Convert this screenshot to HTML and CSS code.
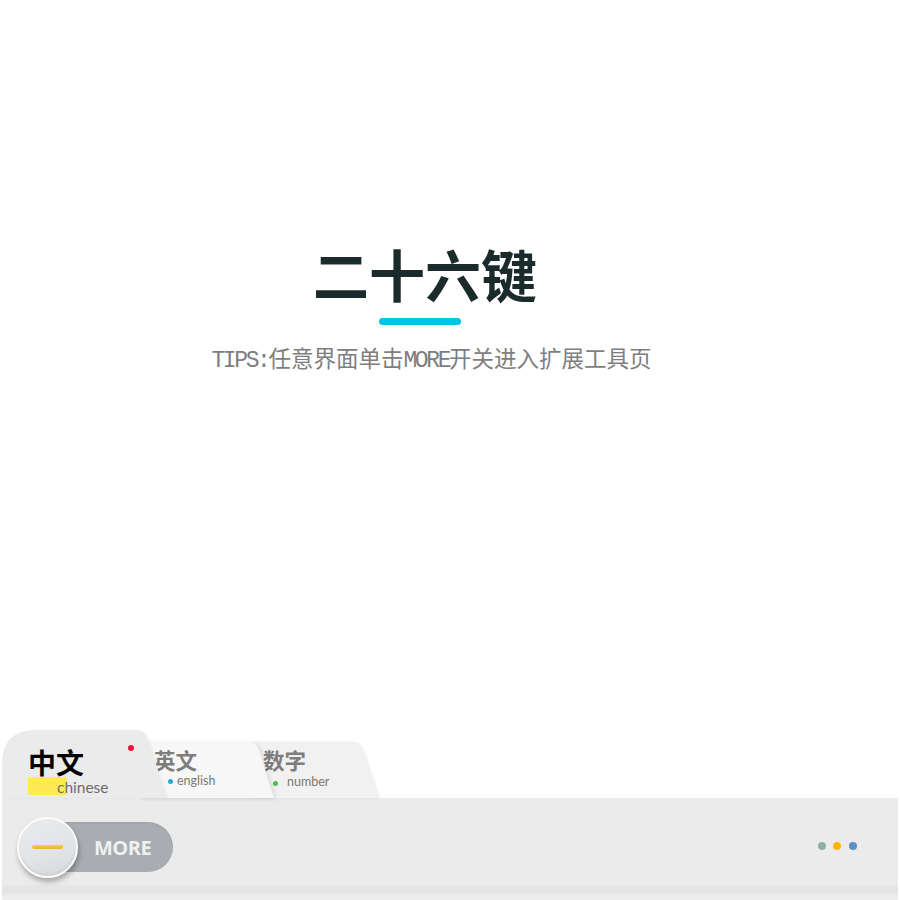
FILE: index.html
```html
<!DOCTYPE html>
<html lang="zh-CN">
<head>
<meta charset="utf-8">
<title>二十六键</title>
<link rel="stylesheet" href="styles.css">
</head>
<body>
<div class="screen">
  <main class="hero">
    <h1 class="title">二十六键</h1>
    <div class="underline"></div>
    <p class="tips"><span class="latin">TIPS:</span>任意界面单击<span class="latin">MORE</span>开关进入扩展工具页</p>
  </main>
  <section class="keyboard">
    <div class="tabs">
      <div class="tab tab-cn">
        <svg class="tab-bg" width="168" height="68" viewBox="0 0 168 68"><path d="M0,68 V34 Q0,0 34,0 H134 Q143,0 146,9 L165,68 Z" fill="#ebebeb"/></svg>
        <span class="badge"></span>
        <span class="tab-title">中文</span>
        <span class="tab-sub cn-sub"><span class="mark"></span><span class="sub-text">chinese</span></span>
      </div>
      <div class="tab tab-en">
        <svg class="tab-bg" width="140" height="56" viewBox="0 0 140 56"><path d="M0,56 V8 Q0,0 8,0 H108 Q116,0 119,8 L134,56 Z" fill="#f7f7f7"/></svg>
        <span class="tab-title">英文</span>
        <span class="tab-sub"><span class="dot dot-blue"></span><span class="sub-text">english</span></span>
      </div>
      <div class="tab tab-num">
        <svg class="tab-bg" width="134" height="56" viewBox="0 0 134 56"><path d="M0,56 V0 H100 Q110,0 113,9 L129,56 Z" fill="#f1f1f1"/></svg>
        <span class="tab-title">数字</span>
        <span class="tab-sub"><span class="dot dot-green"></span><span class="sub-text">number</span></span>
      </div>
    </div>
    <div class="bar">
      <div class="toggle">
        <span class="knob"><span class="dash"></span></span>
        <span class="more">MORE</span>
      </div>
      <div class="dots">
        <span class="pdot pdot-1"></span>
        <span class="pdot pdot-2"></span>
        <span class="pdot pdot-3"></span>
      </div>
    </div>
  </section>
</div>
</body>
</html>
```
FILE: styles.css
```css
* { box-sizing: border-box; }
html, body { margin: 0; padding: 0; background: #ffffff; }
body { font-family: "Noto Sans CJK SC", "Noto Sans", sans-serif; }

.screen {
  width: 900px;
  height: 900px;
  display: flex;
  flex-direction: column;
  overflow: hidden;
}

.hero {
  flex: 1;
  display: flex;
  flex-direction: column;
  align-items: center;
  padding: 245px 50px 0 0;
}

.title {
  margin: 0;
  font-size: 56px;
  line-height: 56px;
  font-weight: 700;
  color: #1b2a2b;
  letter-spacing: 0;
}

.underline {
  width: 82px;
  height: 7px;
  border-radius: 4px;
  background: #00c3e8;
  margin: 17px 10px 0 0;
}

.tips {
  margin: 21px 0 0 13px;
  font-size: 22.5px;
  line-height: 23px;
  color: #7e7e7e;
  font-family: "Noto Sans CJK SC", sans-serif;
  white-space: nowrap;
}
.tips .latin {
  font-family: "Liberation Mono", "DejaVu Sans Mono", monospace;
  font-size: 23px;
  letter-spacing: -2.4px;
}

.keyboard {
  margin: 0 2px;
  display: flex;
  flex-direction: column;
}

.tabs {
  height: 68px;
  display: flex;
  align-items: flex-end;
}

.tab {
  position: relative;
  display: flex;
  flex-direction: column;
}
.tab-bg {
  position: absolute;
  left: 0;
  top: 0;
  z-index: -1;
}
.tab-title, .tab-sub { position: relative; }

.tab-cn {
  width: 168px;
  height: 68px;
  z-index: 3;
  padding: 16px 0 0 26px;
}
.tab-en {
  width: 140px;
  height: 56px;
  margin-left: -30px;
  z-index: 2;
  padding: 7px 0 0 14px;
}
.tab-en .tab-bg { filter: drop-shadow(2px 1px 2px rgba(0,0,0,0.10)); }
.tab-num {
  width: 134px;
  height: 56px;
  margin-left: -30px;
  z-index: 1;
  padding: 7px 0 0 13px;
}
.tab-num .tab-bg { filter: drop-shadow(1px 0 1px rgba(0,0,0,0.08)); }
.tab-cn .tab-bg { filter: drop-shadow(1px 0 1px rgba(0,0,0,0.05)); }

.tab-cn .tab-title {
  font-size: 28px;
  line-height: 28px;
  margin-top: 2px;
  font-weight: 700;
  color: #000;
}
.tab-en .tab-title, .tab-num .tab-title {
  font-size: 21.5px;
  line-height: 22px;
  font-weight: 700;
  color: #7d7d7d;
}

.badge {
  position: absolute;
  left: 126px;
  top: 15px;
  width: 6px;
  height: 6px;
  border-radius: 50%;
  background: #f2123a;
}

.tab-sub {
  display: flex;
  align-items: center;
  font-family: "Lato", "Open Sans", sans-serif;
  color: #7a7a7a;
}
.cn-sub {
  margin-top: 1px;
  font-size: 15.5px;
  height: 18px;
}
.mark {
  flex: none;
  width: 39px;
  height: 18px;
  border-radius: 2px;
  background: #fdea55;
}
.cn-sub .sub-text {
  margin-left: -10px;
  color: #6d6d6d;
  line-height: 18px;
  padding-top: 2px;
}
.tab-en .tab-sub, .tab-num .tab-sub {
  font-size: 12.5px;
  line-height: 14px;
  height: 14px;
}
.tab-en .tab-sub { margin-top: 3px; }
.tab-num .tab-sub { margin-top: 2px; }
.dot {
  flex: none;
  display: block;
  width: 5px;
  height: 5px;
  border-radius: 50%;
}
.dot-blue { background: #2aa7d6; margin: 1px 4px 0 14px; }
.dot-green { background: #49c04f; margin: 7px 9px 0 10px; }
.tab-num .sub-text { padding-top: 4px; }

.bar {
  height: 102px;
  display: flex;
  align-items: flex-start;
  justify-content: space-between;
  padding: 24px 41px 0 16px;
  background: linear-gradient(to bottom, #ebebeb 0%, #ebebeb 84%, #e4e4e4 88%, #e3e3e3 92%, #ececec 96%, #ededed 100%);
}

.toggle {
  display: flex;
  align-items: center;
  width: 155px;
  height: 50px;
  border-radius: 25px;
  background: #a9acb0;
  box-shadow: inset 0 1px 2px rgba(0,0,0,0.08);
}
.knob {
  width: 61px;
  height: 61px;
  flex: none;
  margin-left: -1px;
  border-radius: 50%;
  border: 2px solid #fbfbfb;
  background: linear-gradient(160deg, #e9ebec 0%, #e2e4e5 55%, #d6d8da 100%);
  box-shadow: 1px 4px 5px rgba(0,0,0,0.28), inset 0 -2px 3px rgba(0,0,0,0.06);
  display: flex;
  align-items: center;
  justify-content: center;
}
.dash {
  width: 31px;
  height: 4px;
  border-radius: 2px;
  background: linear-gradient(to bottom, #f6cf4a, #eab23a);
  margin-left: -1px;
}
.more {
  margin-left: 16px;
  font-family: "Open Sans", "Noto Sans", sans-serif;
  font-weight: 700;
  font-size: 20px;
  letter-spacing: -0.5px;
  color: #eff0f0;
}

.dots {
  display: flex;
  gap: 7.7px;
  margin-top: 20px;
}
.pdot {
  width: 8px;
  height: 8px;
  border-radius: 50%;
}
.pdot-1 { background: #8fb0a6; }
.pdot-2 { background: #fbb700; }
.pdot-3 { background: #5b8fc8; }
```
